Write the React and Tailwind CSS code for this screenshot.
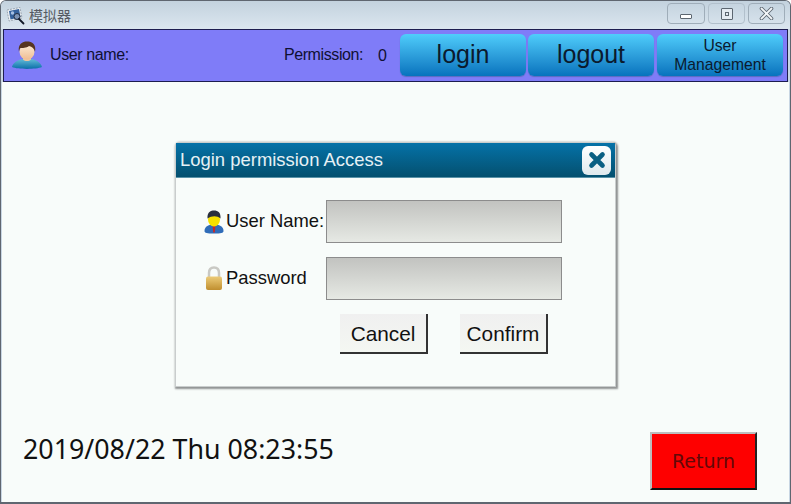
import React from 'react';

const sans = "font-['Liberation_Sans',Arial,sans-serif]";

function AppIcon() {
  return (
    <svg width="19" height="19" viewBox="0 0 19 19" className="shrink-0">
      <path d="M1 4 L14 1.500 L16 12 L3 15 Z" fill="#eef1f4" stroke="#9aa5b1" strokeWidth="1" strokeDasharray="2 1" />
      <path d="M3 5 L13 3 L14.500 11 L4.500 13.500 Z" fill="#34619c" />
      <circle cx="6.500" cy="7" r="1.700" fill="#a7c1e4" />
      <circle cx="11" cy="10.500" r="3" fill="#7d94b5" stroke="#1e2c42" strokeWidth="1" />
      <path d="M13 13 L17.500 17.500" stroke="#111827" strokeWidth="1.800" strokeLinecap="round" />
    </svg>
  );
}

function UserAvatar() {
  return (
    <svg width="32" height="28" viewBox="0 0 32 28" className="shrink-0 -mt-[2px]">
      <defs>
        <linearGradient id="bodyBlue" x1="0" y1="0" x2="0" y2="1">
          <stop offset="0" stopColor="#63bbd8" />
          <stop offset="1" stopColor="#0b6fa8" />
        </linearGradient>
        <linearGradient id="face" x1="0" y1="0" x2="0" y2="1">
          <stop offset="0" stopColor="#fdeed9" />
          <stop offset="1" stopColor="#f0bd92" />
        </linearGradient>
      </defs>
      <path d="M1 26 C2 21 8 18.500 12 18 C14 20 18 20 20 18 C24 18.500 30 21 31 26 C25 28.500 7 28.500 1 26 Z" fill="url(#bodyBlue)" />
      <path d="M12 15 H20 V18.500 C18 20.500 14 20.500 12 18.500 Z" fill="#efc6a0" />
      <ellipse cx="16" cy="10.500" rx="7.500" ry="8" fill="url(#face)" />
      <path d="M8 11 C6.500 3 11.500 0.500 16 0.500 C21 0.500 25.500 3 24 11 C23.500 7.500 21 5.500 18 5 C15.500 7 11 7 9.500 7 C8.500 8 8.200 9.500 8 11 Z" fill="#573520" />
    </svg>
  );
}

function AgentIcon() {
  return (
    <svg width="20" height="24" viewBox="0 0 20 24" className="shrink-0">
      <path d="M0.500 21 C0.500 16 5 14.500 10 14.500 C15 14.500 19.500 16 19.500 21 C19.500 23 17 23.500 10 23.500 C3 23.500 0.500 23 0.500 21 Z" fill="#2f6cb8" />
      <path d="M8.500 15 L11.500 15 L10.800 22.500 L9.200 22.500 Z" fill="#c62828" />
      <ellipse cx="10" cy="9.500" rx="6" ry="7" fill="#f6e000" />
      <path d="M3.500 8.500 C3 2 7 0.500 10 0.500 C14 0.500 17 2.500 16.500 8.500 C13 5.500 8 5.500 3.500 8.500 Z" fill="#2a2f3d" />
    </svg>
  );
}

function LockIcon() {
  return (
    <svg width="18" height="25" viewBox="0 0 18 25" className="shrink-0">
      <defs>
        <linearGradient id="gold" x1="0" y1="0" x2="0" y2="1">
          <stop offset="0" stopColor="#eccb78" />
          <stop offset="1" stopColor="#c08f2f" />
        </linearGradient>
      </defs>
      <path d="M4 11 V7 C4 3.500 6 1.500 9 1.500 C12 1.500 14 3.500 14 7 V11" fill="none" stroke="#c9c9c4" strokeWidth="2.500" />
      <rect x="1" y="10.500" width="16" height="13.500" rx="2" fill="url(#gold)" />
    </svg>
  );
}

export default function App() {
  const blueBtn = 'h-[42px] w-[126px] rounded-md bg-gradient-to-b from-[#4fcdfb] to-[#0673bd] shadow-[0_1px_1px_#5a6cc0] text-[#0b1a2e] flex items-center justify-center text-center';
  const dlgBtn = 'h-10 w-[88px] bg-gradient-to-b from-[#f0f0f0] to-[#f4f7f2] border-r-2 border-b-2 border-[#333] text-[20.800px] text-[#111] flex items-center justify-center pt-[1px]';
  const field = 'w-[236px] h-[43px] bg-gradient-to-b from-[#c2c3c0] to-[#e6e9e4] border border-[#8c8c8c]';

  return (
    <div className={`w-[791px] h-[504px] flex flex-col overflow-hidden relative bg-[#c8d6e3] border border-[#5f6670] border-b-2 rounded-t-md ${sans}`}>
      {/* titlebar */}
      <div className="h-7 shrink-0 flex items-center justify-between pl-[5px] pr-[5px] bg-gradient-to-b from-[#c3d2de] to-[#dbe6ef]">
        <div className="flex items-center gap-[4px]">
          <AppIcon />
          <span className="text-[14px] text-[#555b63] font-['Noto_Sans_CJK_SC',sans-serif]">模拟器</span>
        </div>
        <div className="flex gap-[3px] -mt-[3px]">
          <div className="w-[38px] h-[21px] border border-[#9fadb9] rounded-sm flex items-end justify-center pb-[4px]">
            <div className="w-3 h-[5px] bg-white border border-[#5c6670] rounded-[1px]"></div>
          </div>
          <div className="w-[37px] h-[21px] border border-[#b2c0cc] rounded-sm flex items-center justify-center">
            <div className="w-3 h-3 bg-[#e4ebf1] border border-[#5c6670] rounded-[1px] flex items-center justify-center">
              <div className="w-1 h-1 border border-[#5c6670]"></div>
            </div>
          </div>
          <div className="w-[37px] h-[21px] border border-[#9fadb9] rounded-sm flex items-center justify-center">
            <svg width="15" height="13" viewBox="0 0 15 13">
              <path d="M2.500 1.500 L12.500 11.500 M12.500 1.500 L2.500 11.500" stroke="#5c6670" strokeWidth="3.600" strokeLinecap="round" />
              <path d="M2.500 1.500 L12.500 11.500 M12.500 1.500 L2.500 11.500" stroke="#f3f6f8" strokeWidth="1.800" strokeLinecap="round" />
            </svg>
          </div>
        </div>
      </div>

      {/* user bar */}
      <div className="h-[53px] shrink-0 mx-[2px] flex items-center bg-[#7f7cf8] border border-[#1d1d50] pl-[7px] pr-[4px] text-[#0f1033]">
        <UserAvatar />
        <span className="ml-[7px] -mt-[2px] text-[16px] tracking-[-0.4px]">User name:</span>
        <span className="ml-auto -mt-[2px] -translate-x-[1px] text-[16px] tracking-[-0.4px]">Permission:</span>
        <span className="ml-[14px] mr-[13px] text-[16px]">0</span>
        <div className="flex gap-[2px] -mt-[1px]">
          <div className={`${blueBtn} text-[25px]`}>login</div>
          <div className={`${blueBtn} text-[25px]`}>logout</div>
          <div className={`${blueBtn} ml-[1px] text-[15.700px] leading-[19px]`}>User<br />Management</div>
        </div>
      </div>

      {/* body */}
      <div className="flex-1 mx-[1px] bg-[#f8fcfa] flex items-end justify-between pl-[21px] pr-[32px] pb-[12px]">
        <div className="mb-[22px] text-[26.800px] leading-[38px] text-[#111] font-['Noto_Sans',sans-serif]">2019/08/22 Thu 08:23:55</div>
        <div className="w-[107px] h-[58px] bg-[#fe0000] border-2 border-t-[#bdbdbd] border-l-[#bdbdbd] border-r-[#222] border-b-[#111] flex items-center justify-center text-[19px] text-[#640808] font-['DejaVu_Sans',sans-serif]">Return</div>
      </div>

      {/* login dialog */}
      <div className="absolute left-[174px] top-[141px] w-[441px] h-[245px] bg-[#f8fcfa] border border-[#c9cdcd] rounded-t-sm shadow-[1px_1px_2px_1px_#8f9292]">
        <div className="h-[35px] flex items-center justify-between pl-[4px] pr-[4px] bg-gradient-to-b from-[#0572a8] to-[#04506f] border-b border-[#5a93a8]">
          <span className="text-[18.450px] text-[#e6f1f5]">Login permission Access</span>
          <div className="w-[29px] h-[29px] rounded-md bg-gradient-to-b from-[#ffffff] to-[#dfe9ed] flex items-center justify-center">
            <svg width="18" height="18" viewBox="0 0 18 18">
              <path d="M3.500 3.500 L14.500 14.500 M14.500 3.500 L3.500 14.500" stroke="#0a5f83" strokeWidth="4.600" strokeLinecap="round" />
            </svg>
          </div>
        </div>

        <div className="pt-[22px] pl-[28px] flex flex-col gap-[14px]">
          <div className="flex items-center h-[43px]">
            <AgentIcon />
            <span className="ml-[2px] w-[100px] -mt-[1px] text-[18.400px] text-[#111]">User Name:</span>
            <div className={field}></div>
          </div>
          <div className="flex items-center h-[43px]">
            <div className="w-5 flex justify-center"><LockIcon /></div>
            <span className="ml-[2px] w-[100px] text-[18.400px] text-[#111] -mt-[2px]">Password</span>
            <div className={field}></div>
          </div>
          <div className="flex pl-[136px] gap-[32px]">
            <div className={dlgBtn}>Cancel</div>
            <div className={dlgBtn}>Confirm</div>
          </div>
        </div>
      </div>
    </div>
  );
}
